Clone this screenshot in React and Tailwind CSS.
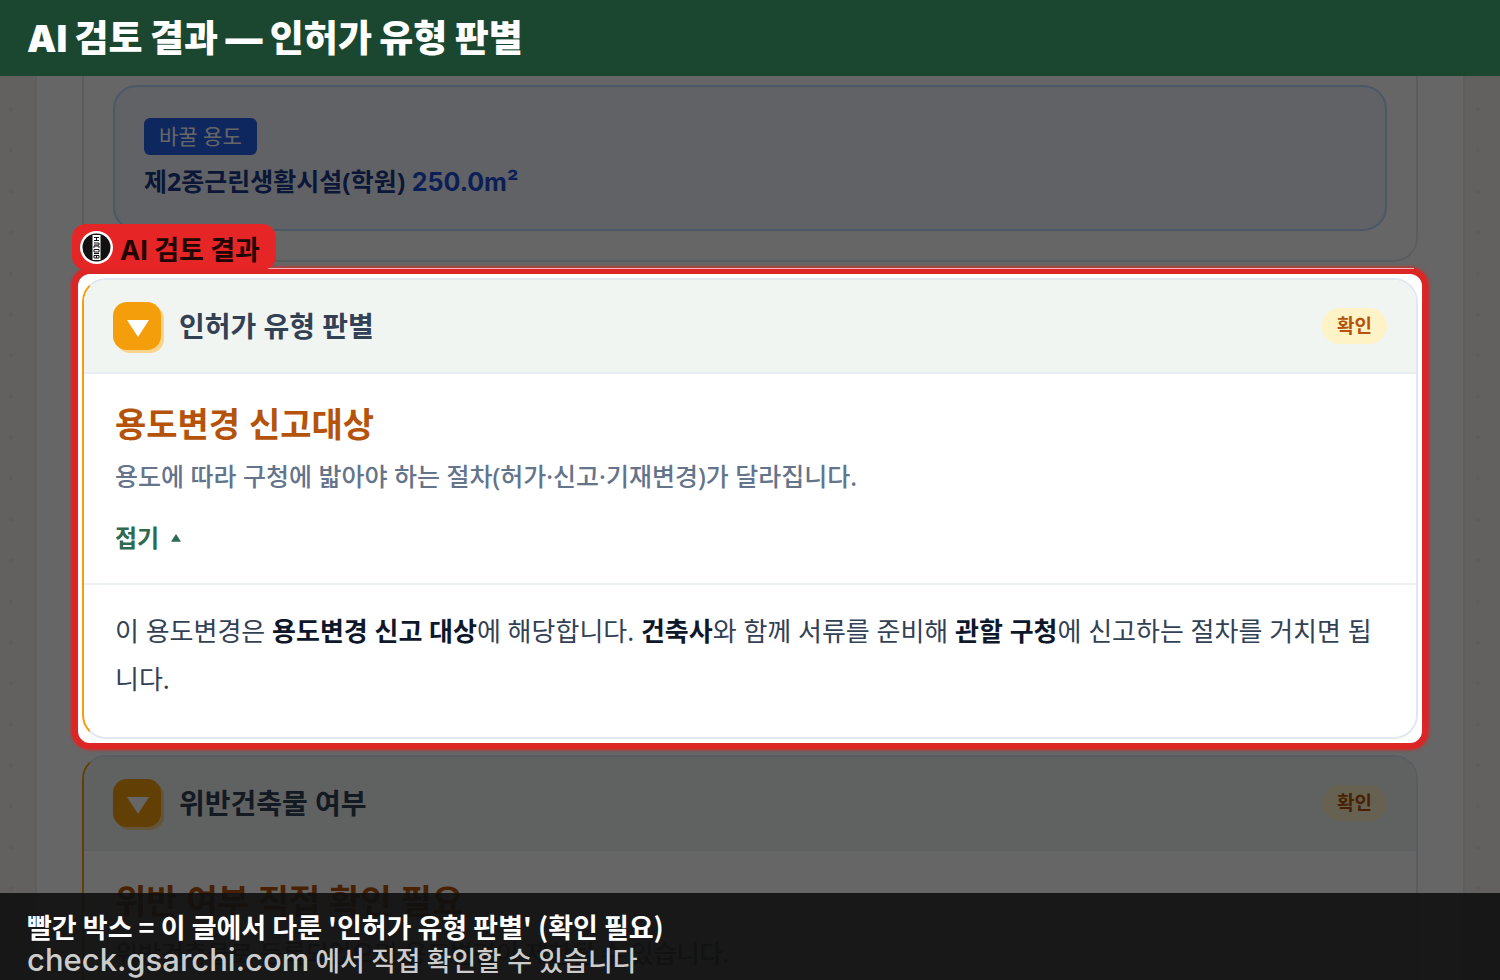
import { useState } from "react";

function Triangle({ className, up }) {
  return (
    <svg viewBox="0 0 22 17" className={className} fill="currentColor" aria-hidden="true">
      <path d={up ? "M0 17 11 0 22 17Z" : "M0 0H22L11 17Z"} />
    </svg>
  );
}

function BrandMark() {
  return (
    <svg viewBox="0 0 33 33" className="size-[33px] shrink-0" aria-hidden="true">
      <circle cx="16.5" cy="16.5" r="16.5" fill="#fff" />
      <circle cx="16.5" cy="16.5" r="14" fill="#111" />
      <rect x="12.5" y="4" width="8" height="25" fill="#fff" />
      <path
        d="M14 6.5h5M16.500 6.500v3M14 9.500h5M14 12h5v2h-5M14 17v-2h5v2M14 18.500h5v2.500h-5zM14 22.500h5M14 27v-2.500h5V27zM16.500 25v2"
        fill="none"
        stroke="#111"
        strokeWidth="1"
      />
    </svg>
  );
}

function ReviewCard({ title, verdict, summary, children }) {
  const [open, setOpen] = useState(true);

  return (
    <article className="overflow-hidden rounded-3xl border-2 border-[#e2e8f0] border-l-[#f59e0b] bg-white">
      <header className="flex items-center gap-[18px] border-b-2 border-[#e9eef2] bg-[#f1f5f2] px-[29px] py-[22px]">
        <span className="flex size-12 items-center justify-center rounded-[14px] bg-[#f59e0b] text-white shadow-[3px_3px_0_#fad48c]">
          <Triangle className="mt-1 ml-0.5 w-[22px]" />
        </span>
        <h2 className="flex-1 text-[28px] leading-[48px] font-bold text-[#334155]">{title}</h2>
        <span className="rounded-full bg-[#fef3c7] px-[15px] text-[19px] leading-9 font-bold text-[#b45309]">
          확인
        </span>
      </header>

      <div className="px-[31px] pt-6 pb-[21px]">
        <p className="text-[34px] leading-[52px] font-bold text-[#b45309]">{verdict}</p>
        <p className="text-[25px] leading-[52px] font-medium text-[#64748b]">{summary}</p>
        <button
          type="button"
          aria-expanded={open}
          onClick={() => setOpen(!open)}
          className="mt-3 flex items-center gap-3 text-2xl leading-[48px] font-bold text-[#2d6a4f]"
        >
          접기
          <Triangle up={open} className="w-[10px]" />
        </button>
      </div>

      {open && children && (
        <p className="border-t-2 border-[#edf1f4] px-[31px] pt-[22px] pb-[34px] text-[26px] leading-[48px] text-[#334155]">
          {children}
        </p>
      )}
    </article>
  );
}

function Spotlight({ label, children }) {
  return (
    <div className="relative z-10 -mx-[10px] -my-[10px] rounded-[18px] border-[6px] border-[#dc2626] bg-white p-1 shadow-[0_0_3px_1px_#dc2626,0_0_0_2000px_rgba(0,0,0,0.6)]">
      {children}
      <div className="absolute -top-[6px] right-2 left-2 h-px bg-[#f3b5b5]" />
      <div className="absolute -top-[50px] -left-[6px] flex h-[46px] items-center gap-[7px] rounded-[14px] bg-[#e62626] pr-4 pl-2 font-['Inter','Noto_Sans_CJK_KR',sans-serif] text-[27px] font-bold whitespace-nowrap text-[#210505]">
        <BrandMark />
        <span className="pt-2">{label}</span>
      </div>
    </div>
  );
}

function App() {
  return (
    <div className="flex h-screen flex-col overflow-hidden font-['Noto_Sans','Noto_Sans_CJK_KR',sans-serif]">
      <header className="relative z-20 flex h-[76px] shrink-0 items-center bg-[#1b4731] px-[27px]">
        <h1 className="font-['Inter','Noto_Sans_CJK_KR',sans-serif] text-[37px] leading-none font-black text-white">
          AI 검토 결과 — 인허가 유형 판별
        </h1>
      </header>

      <main className="relative min-h-0 flex-1 overflow-hidden bg-[#f5f3ee] bg-[radial-gradient(circle,#e9e7e2_1px,transparent_3px),radial-gradient(circle,#e9e7e2_1px,transparent_3px)] bg-[size:22px_41px,44px_41px] bg-[position:left_top_13px,right_top_13px] bg-repeat-y">
        <div className="mx-[35px] flex flex-col gap-4 border-x-2 border-[#e9ebe9] bg-white px-[45px]">
          <section className="rounded-b-3xl border-2 border-t-0 border-[#e2e8f0] px-[29px] pt-[9px] pb-[29px]">
            <div className="flex flex-col items-start rounded-3xl border-2 border-[#bfdbfe] bg-[#eff6ff] px-[29px] pt-[31px] pb-[22px]">
              <span className="rounded-md bg-[#2563eb] px-[15px] text-[21px] leading-[37px] text-white">
                바꿀 용도
              </span>
              <p className="text-[25px] leading-[52px] font-bold text-[#1e3a8a]">
                제2종근린생활시설(학원){" "}
                <span className="font-['Inter',sans-serif] leading-none text-[#1d4ed8]">250.0m²</span>
              </p>
            </div>
          </section>

          <Spotlight label="AI 검토 결과">
            <ReviewCard
              title="인허가 유형 판별"
              verdict="용도변경 신고대상"
              summary="용도에 따라 구청에 밟아야 하는 절차(허가·신고·기재변경)가 달라집니다."
            >
              이 용도변경은 <strong className="text-[#0f172a]">용도변경 신고 대상</strong>에 해당합니다.{" "}
              <strong className="text-[#0f172a]">건축사</strong>와 함께 서류를 준비해{" "}
              <strong className="text-[#0f172a]">관할 구청</strong>에 신고하는 절차를 거치면 됩니다.
            </ReviewCard>
          </Spotlight>

          <ReviewCard
            title="위반건축물 여부"
            verdict="위반 여부 직접 확인 필요"
            summary="위반건축물로 등록되었으면 용도변경이 제한될 수 있습니다."
          />
        </div>
      </main>

      <footer className="absolute inset-x-0 bottom-0 z-20 bg-[#0f0f0f]/90 px-[27px] pt-[17px] pb-1 font-['Noto_Sans_CJK_KR',sans-serif] text-[27px] leading-[33px]">
        <p className="font-bold text-white">빨간 박스 = 이 글에서 다룬 '인허가 유형 판별' (확인 필요)</p>
        <p className="font-medium text-[#cccccc]">
          <a href="https://check.gsarchi.com" className="font-['Inter',sans-serif] text-[31px] leading-none">
            check.gsarchi.com
          </a>{" "}
          에서 직접 확인할 수 있습니다
        </p>
      </footer>
    </div>
  );
}

export default App;
